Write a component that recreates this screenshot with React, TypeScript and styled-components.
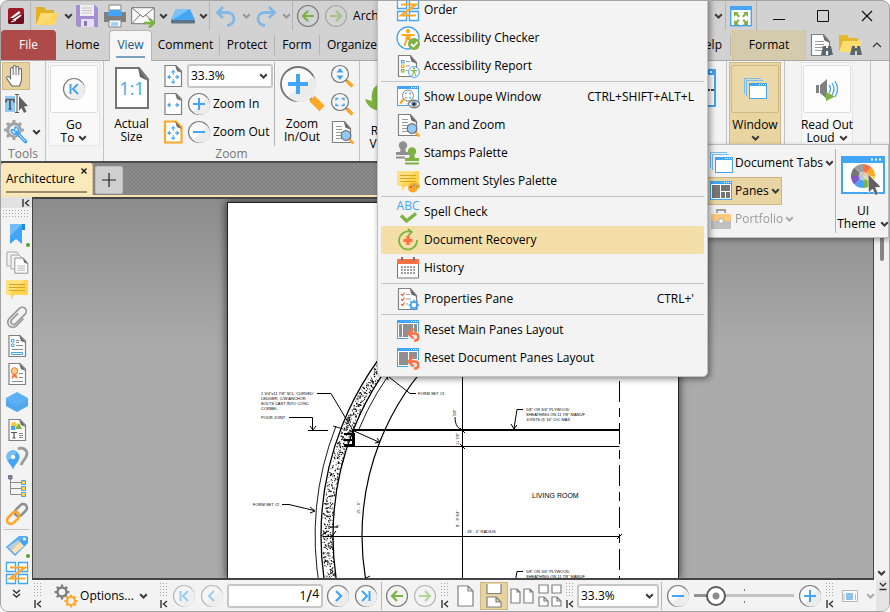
import React from 'react';
import styled, { createGlobalStyle } from 'styled-components';

const BLUE = '#42a5f5';
const ORANGE = '#ffa726';
const GREEN = '#7cb342';
const GRAY = '#757575';

const Global = createGlobalStyle`
  * { box-sizing: border-box; }
  body { margin: 0; background: #fff; font-family: "Open Sans", "Noto Sans", sans-serif; font-size: 12px; line-height: 14px; color: #000; }
  button, input, select { font: inherit; color: inherit; }
  button { border: 0; padding: 0; background: none; }
`;

/* ---------- layout parts ---------- */

const Window = styled.div`
  position: relative; height: 100vh; min-height: 420px; display: flex; flex-direction: column;
  background: #d2d2d2; border: 1px solid #a3a3a3; border-radius: 8px; overflow: hidden;
`;
const Row = styled.div`display: flex; align-items: center;`;
const TitleBar = styled.header`display: flex; justify-content: space-between; height: 29px; flex: none;`;
const Slot = styled.button<{ $w?: number; $h?: number; $on?: boolean }>`
  display: flex; align-items: center; justify-content: center; flex: none;
  width: ${p => p.$w ?? 28}px; height: ${p => p.$h ?? 28}px;
  ${p => p.$on && 'background: #e8d3a0; border: 1px solid #cdb988;'}
`;
const VLine = styled.span<{ $h?: number; $m?: number }>`
  width: 1px; height: ${p => p.$h ?? 28}px; background: #b4b4b4; flex: none; margin: 0 ${p => p.$m ?? 0}px;
`;
const TabRow = styled.nav`display: flex; justify-content: space-between; height: 31px; flex: none; border-bottom: 1px solid #a9a9a9;`;
const Tab = styled.button<{ $w: number; $kind?: 'file' | 'active' | 'context' }>`
  width: ${p => p.$w}px; height: 30px; flex: none; text-align: center;
  ${p => p.$kind === 'file' && 'background: #ad4a4a; color: #fff; border-radius: 4px 4px 0 0;'}
  ${p => p.$kind === 'context' && 'background: #d4cbad; border: 1px dotted #d9bf6c; border-width: 0 1px;'}
  ${p => p.$kind === 'active' && `
    height: 31px; background: #f6f6f6; color: #1f5582; border: 1px solid #b5b5b5; border-bottom: 0;
    border-radius: 4px 4px 0 0;`}
  span { display: block; margin: 0 6px; padding: 4px 0; ${p => p.$kind === 'active' && 'border-bottom: 2px solid #7ba0c2;'} }
`;
const Ribbon = styled.section`display: flex; justify-content: space-between; height: 102px; flex: none; background: #f3f3f3; border-bottom: 2px solid #4c4c4c;`;
const Group = styled.div<{ $w: number }>`
  display: flex; flex-direction: column; flex: none; width: ${p => p.$w}px; height: 100px; border-right: 1px solid #c4c4c4;
`;
const GroupBody = styled.div`display: flex; flex: 1; padding-top: 1px;`;
const GroupLabel = styled.div`height: 14px; text-align: center; color: #777;`;
const Column = styled.div<{ $w?: number }>`display: flex; flex-direction: column; ${p => p.$w && `width: ${p.$w}px; flex: none;`}`;
const BigButton = styled.button<{ $w: number; $framed?: boolean; $on?: boolean }>`
  display: flex; flex-direction: column; align-items: center; flex: none; width: ${p => p.$w}px; height: 84px; padding-top: 2px; line-height: 13px;
  ${p => p.$framed && 'border: 1px solid #e6e6e6; background: #f8f8f8;'}
  ${p => p.$on && 'border-color: #cdb988; background: #e9d5a2;'}
`;
const BigFace = styled.span<{ $framed?: boolean; $on?: boolean }>`
  display: flex; align-items: center; justify-content: center; width: 48px; height: 48px; margin-bottom: 5px; flex: none;
  ${p => p.$framed && 'border: 1px solid #dedede; background: #fdfdfd; border-radius: 2px;'}
  ${p => p.$on && 'border-color: #cdb988; background: #ebd8a8;'}
`;
const InlineRow = styled.span`display: flex; align-items: center; justify-content: center; gap: 4px; min-height: 13px; white-space: nowrap;`;
const SelectBox = styled.label<{ $w: number }>`
  display: grid; align-items: center; width: ${p => p.$w}px; height: 24px; flex: none;
  border: 2px solid #c6c6c6; border-radius: 3px; background: #fff;
  > * { grid-area: 1 / 1; }
  > svg { justify-self: end; margin-right: 3px; pointer-events: none; }
`;
const Select = styled.select`appearance: none; border: 0; background: none; padding: 0 2px; width: 100%; outline: 0;`;
const TextButton = styled.button`display: flex; align-items: center; gap: 2px; height: 28px; white-space: nowrap;`;

const DocTabs = styled.div`
  display: flex; height: 34px; flex: none; align-items: flex-start; border-bottom: 2px solid #f6e4b4;
  background: conic-gradient(rgba(0,0,0,.07) 25%, transparent 0 50%, rgba(0,0,0,.07) 0 75%, transparent 0) 0 0 / 4px 4px #8c8c8c;
`;
const DocTab = styled.div`
  width: 92px; height: 32px; background: #fbe8bb; border-radius: 3px 3px 0 0; padding: 0 5px;
  display: grid; grid-template-columns: 1fr auto; grid-template-rows: 30px;
  border-right: 1px solid #d8c493;
`;
const DocName = styled.span`align-self: stretch; padding-top: 9px; grid-column: 1 / 3; grid-row: 1; border-bottom: 2px solid #9c8d6c;`;
const DocClose = styled.button`grid-column: 2; grid-row: 1; display: flex; align-self: start; margin-top: 5px;`;
const NewTab = styled.button`
  display: flex; align-items: center; justify-content: center; width: 28px; height: 28px; margin: 3px 0 0 2px;
  background: #cfcfcf; border: 1px solid #bcbcbc; border-radius: 2px;
`;
const Body = styled.div`display: flex; flex: 1; min-height: 0;`;
const Sidebar = styled.aside`display: flex; flex-direction: column; align-items: center; width: 31px; flex: none; background: #f3f3f3;`;
const SideHead = styled.button`display: flex; justify-content: flex-end; align-items: center; width: 100%; height: 11px; flex: none; background: #e2e2e2; padding-right: 2px;`;
const SideButton = styled.button`display: flex; align-items: center; justify-content: center; position: relative; width: 28px; height: 28px; flex: none;`;
const Dot = styled.i`position: absolute; right: 1px; bottom: 1px; width: 4px; height: 4px; border-radius: 2px; background: #5a9e2b;`;
const HLine = styled.hr`width: 26px; margin: 1px 0; border: 0; height: 1px; flex: none; background: #c4c4c4;`;
const Grip = styled.i<{ $wide?: boolean }>`
  display: block; flex: none; width: ${p => (p.$wide ? 27 : 9)}px; height: ${p => (p.$wide ? 9 : 15)}px; margin: ${p => (p.$wide ? '2px 0 1px' : '0')};
  background: #a6a6a6;
  mask: linear-gradient(90deg, #000 1px, transparent 1px) 0 0 / 3px 3px, linear-gradient(#000 1px, transparent 1px) 0 0 / 3px 3px;
  mask-composite: intersect;
`;
const Main = styled.div`display: flex; flex-direction: column; flex: 1; min-width: 0;`;
const View = styled.div`display: flex; flex: 1; min-height: 0;`;
const Canvas = styled.main`
  flex: 1; min-width: 0; display: flex; justify-content: center; padding-top: 3px; overflow: hidden;
  border: 1px solid #444; border-top-width: 2px; border-bottom-width: 2px;
  background:
    conic-gradient(rgba(0,0,0,.04) 25%, transparent 0 50%, rgba(0,0,0,.04) 0 75%, transparent 0) 0 0 / 4px 4px,
    linear-gradient(#8f8f8f, #aeaeae 150px);
`;
const Page = styled.article`flex: none; background: #fff; box-shadow: 0 0 8px 1px rgba(0,0,0,.6); border: 1px solid #222; border-width: 1px 1px 0 1px; overflow: hidden;`;
const ScrollBar = styled.div`
  display: flex; flex-direction: column; align-items: center; justify-content: space-between; width: 15px; flex: none; padding: 36px 0 4px; background: #f1f1f1;
`;
const Thumb = styled.i`width: 4px; height: 28px; border-radius: 2px; background: #858585;`;
const StatusBar = styled.footer`display: flex; align-items: center; height: 31px; flex: none; background: #f3f3f3;`;
const GripCol = styled.div`display: flex; flex-direction: column; align-items: flex-start; gap: 2px; width: 10px; flex: none; margin-left: 2px;`;
const PageField = styled.label`
  display: flex; align-items: center; justify-content: flex-end; width: 96px; height: 24px; padding-right: 2px; flex: none; margin: 0 1px;
  border: 2px solid #c6c6c6; border-radius: 3px; background: #fff;
  input { width: 70px; border: 0; padding: 0; outline: 0; background: none; text-align: right; }
  sup { font-size: 12px; line-height: 12px; vertical-align: top; margin-bottom: 4px; }
  b { font-weight: 400; font-size: 16px; }
`;
const Range = styled.input`
  appearance: none; flex: 1; min-width: 60px; height: 20px; margin: 0 2px; border: 0;
  background:
    linear-gradient(90deg, #929292 22px, #c2c2c2 22px) center / 100% 3px no-repeat,
    linear-gradient(#f3f3f3, #f3f3f3) center / 2px 10px no-repeat,
    linear-gradient(#777, #777) center / 1px 14px no-repeat;
  &::-webkit-slider-thumb {
    appearance: none; width: 20px; height: 20px; border: 2px solid #5c5c5c; border-radius: 10px;
    background: radial-gradient(circle, #8c8c8c 3px, #fff 4px);
  }
`;
const EndCol = styled.button`display: flex; align-items: flex-start; justify-content: center; width: 13px; height: 31px; padding-top: 2px; flex: none; margin-left: auto; background: #e4e4e4;`;

const Menu = styled.div`
  position: absolute; z-index: 3; left: 376px; top: -6px; width: 331px; padding: 0 3px 4px; background: #f3f3f3;
  border: 1px solid #c2c2c2; border-radius: 0 0 5px 5px; box-shadow: 2px 2px 6px rgba(0,0,0,.45);
`;
const MenuItem = styled.button<{ $on?: boolean }>`
  display: flex; align-items: center; width: 100%; height: 28px; padding: 0 10px 0 15px; gap: 4px; white-space: nowrap; border-radius: 2px;
  background: ${p => (p.$on ? '#f5dfa8' : 'transparent')};
  kbd { font: inherit; margin-left: auto; }
`;
const MenuLine = styled.hr`margin: 1px 0; border: 0; height: 1px; background: #c4c4c4;`;
const Flyout = styled.div`
  position: absolute; z-index: 2; right: 0; top: 143px; width: 188px; height: 94px; display: flex; align-items: center; padding-left: 5px;
  background: #f3f3f3; border: 1px solid #bcbcbc; box-shadow: 1px 2px 5px rgba(0,0,0,.35);
`;
const FlyButton = styled.button<{ $on?: boolean; $dim?: boolean }>`
  display: flex; align-items: center; align-self: flex-start; height: 28px; gap: 2px; padding: 0 1px; white-space: nowrap; border: 1px solid transparent;
  ${p => p.$on && 'background: #e9d5a2; border-color: #c9b684;'}
  ${p => p.$dim && 'color: #858585; opacity: .8;'}
`;
const Plain = styled.span`white-space: nowrap;`;

/* ---------- icons ---------- */

const IconSvg = styled.svg`display: block; flex: none;`;
type P = { children: React.ReactNode; w?: number; h?: number; vb?: string };
const I = ({ children, w = 24, h = 24, vb }: P) => (
  <IconSvg width={w} height={h} viewBox={vb ?? `0 0 ${w} ${h}`} fill="none" aria-hidden="true">{children}</IconSvg>
);

const Chev = ({ c = '#3a3a3a' }: { c?: string }) => <I w={9} h={6}><path d="M1.200 1.200l3.300 3.300 3.300-3.300" stroke={c} strokeWidth="2" /></I>;
const Collapse = () => <I w={8} h={8}><path d="M1 0v8M7 1L3.500 4 7 7" stroke="#333" strokeWidth="1.400" /></I>;
const DocShape = ({ s = '#808080', fill = '#fff' }: { s?: string; fill?: string }) => (
  <><path d="M2.500 1.500h12l6 7v14h-18z" fill={fill} stroke={s} strokeWidth="1.200" /><path d="M13.500 1l7.500 9-5.500-2.500z" fill="#616161" /></>
);
const SmallDoc = ({ s = '#808080', sw = 1.2 }: { s?: string; sw?: number }) => (
  <><path d="M4 1.500h11l5.500 5.500v15.500H4z" fill="#fff" stroke={s} strokeWidth={sw} /><path d="M14 1l7 8-5-2z" fill="#616161" /></>
);
const Circle = ({ children, dim }: { children: React.ReactNode; dim?: boolean }) => (
  <I><g opacity={dim ? 0.5 : 1}><circle cx="12" cy="12" r="10.500" fill="#fafafa" stroke="#7c7c7c" strokeWidth="1.200" /><path d="M20 5.500a10 10 0 0 1-14 14.500z" fill="#ececec" />{children}</g></I>
);
const Plus = () => <Circle><path d="M12 6v12M6 12h12" stroke={BLUE} strokeWidth="2" /></Circle>;
const Minus = () => <Circle><path d="M6 12h12" stroke={BLUE} strokeWidth="2" /></Circle>;
const First = ({ dim }: { dim?: boolean }) => <Circle dim={dim}><path d="M8.500 7v10M16 7l-5 5 5 5" stroke={BLUE} strokeWidth="2" /></Circle>;
const Prev = () => <Circle dim><path d="M14 7l-5 5 5 5" stroke={BLUE} strokeWidth="2" /></Circle>;
const Next = () => <Circle><path d="M10 7l5 5-5 5" stroke={BLUE} strokeWidth="2.200" /></Circle>;
const Last = () => <Circle><path d="M15.500 7v10M8 7l5 5-5 5" stroke={BLUE} strokeWidth="2" /></Circle>;
const Ring = ({ children, dim }: { children: React.ReactNode; dim?: boolean }) => (
  <I><g opacity={dim ? 0.5 : 1}><circle cx="12" cy="12" r="10.500" stroke="#7c7c7c" strokeWidth="1.200" />{children}</g></I>
);
const Back = () => <Ring><path d="M18 12H7.500M12 7l-5 5 5 5" stroke={GREEN} strokeWidth="2.200" /></Ring>;
const Fwd = () => <Ring dim><path d="M6 12h10.500M12 7l5 5-5 5" stroke={GREEN} strokeWidth="2.200" /></Ring>;
const Logo = () => (
  <I w={18} h={18}><rect x="1" y="1" width="16" height="16" rx="2" fill="#9b1b26" /><path d="M1 13L17 7v8a2 2 0 0 1-2 2H3a2 2 0 0 1-2-2z" fill="#6d0f1a" />
    <path d="M3 11l9-7 1.500 2L6 11zM5 13l8-5 2 .5L8 13.500z" fill="#fff" /><path d="M4 15l5-1.500" stroke="#fff" /></I>
);
const Folder = () => (
  <I><path d="M1 3h8l2 3h8v4H6L2 21H1z" fill="#e2b023" /><path d="M6 9h18l-5 12H1z" fill="#ffd75e" /><path d="M6 9h14L6 21H1z" fill="#ffe082" opacity=".6" /></I>
);
const Save = () => (
  <I><path d="M1 1h19l3 3v19H3l-2-2z" fill="#a58fd0" /><path d="M5 1h14v11H5z" fill="#eee" /><path d="M7 4h10M7 6.500h10M7 9h10" stroke="#c9c9c9" /><path d="M6 15h13v8H6z" fill="#e4e0ee" /><path d="M9 17h3v5H9z" fill="#8d77bb" /></I>
);
const Print = () => (
  <I><path d="M6 1h12v5H6z" fill="#fff" stroke="#808080" /><path d="M1 8h22v10H1z" fill="#808080" /><path d="M6 6h12l1 6H5z" fill={BLUE} /><path d="M6 16h12v7H6z" fill="#fff" stroke="#808080" /><path d="M8 19h7M8 21h7" stroke={BLUE} /></I>
);
const Mail = () => (
  <I><path d="M.7 3.700h22.600v16H.7z" fill="#fafafa" stroke={GRAY} /><path d="M1 4l11 9L23 4M1 19.500l8-8.500M23 19.500l-8-8.500" stroke={GRAY} /><path d="M13 19h9M18 14.500l5 4.500-5 4.500" stroke={GREEN} strokeWidth="2.400" /></I>
);
const Scan = () => <I><path d="M5 5h14l5 11H0z" fill={BLUE} /><path d="M5 5h14L3 15H0z" fill="#7cc1f8" /><rect x="0" y="16" width="24" height="3.500" rx="1" fill="#5f7380" /></I>;
const Undo = () => <I w={22}><path d="M8 3L2.500 8.500 8 14M3 8.500h9c3.500 0 7 2 7 6s-3 7-7 7" stroke="#7fb7e6" strokeWidth="2.800" /></I>;
const Redo = () => <I w={22}><path d="M14 3l5.500 5.500L14 14M19 8.500h-9c-3.500 0-7 2-7 6s3 7 7 7" stroke="#7fb7e6" strokeWidth="2.800" /></I>;
const FullScreen = () => (
  <I><rect x="1.700" y="2.700" width="20.600" height="19" fill="#fff" stroke={BLUE} strokeWidth="1.400" /><path d="M1 2h22v4H1z" fill={BLUE} />
    <path d="M5 8h5L8.500 9.500 11 12l-1.500 1.500L7 11l-2 2zM19 8v5l-2-2-2.500 2.500L13 12l2.500-2.500L14 8zM5 21v-5l2 1.500L9 15l1.500 1.500L8.500 19l1.500 2zM19 21h-5l1.500-2-2-2.500L15 15l2 2.500 2-1.500z" fill={GREEN} /></I>
);
const Hand = () => (
  <I><path d="M8 22c-2-3-4-5-5.500-8 0-2 2.500-2 4 .5V5c0-2 2.700-2 2.700 0V3c0-2 2.800-2 2.800 0v1c0-2 2.800-2 2.800 0v2c0-2 2.700-2 2.700 0v9c0 3-1 4.500-2 7z" fill="#fff" stroke="#6d6d6d" strokeWidth="1.100" /><path d="M9.200 5v6M12 4v7M14.800 5v6" stroke="#6d6d6d" /></I>
);
const SelectText = () => (
  <I><path d="M0 4h10v16H0z" fill="#90caf9" /><path d="M1 7.500h8v3M1 7.500v3M5 7.500v9M3.500 17h3" stroke="#555" strokeWidth="1.700" /><path d="M10 2.500h4M12 3v17M10 20.500h4" stroke="#555" /><path d="M14 4l9 10-4 .5 2.500 5-2.500 1.500-2.500-5-2.500 2.500z" fill="#616161" /></I>
);
const gearTeeth = Array.from({ length: 8 }, (_, i) => i * 45);
const Gear = ({ x, y, r, c }: { x: number; y: number; r: number; c: string }) => (
  <g transform={`translate(${x} ${y})`}><circle r={r} stroke={c} strokeWidth={r * 0.55} />
    {gearTeeth.map(a => <path key={a} transform={`rotate(${a})`} d={`M0 ${-r}V${-r * 1.65}`} stroke={c} strokeWidth={r * 0.5} />)}</g>
);
const Wrench = () => (
  <I><Gear x={10} y={10} r={6} c="#a2a2a2" /><circle cx="10.500" cy="10.500" r="5" fill="#f3f3f3" /><path d="M12.500 12.500l9 9" stroke={BLUE} strokeWidth="3.600" strokeLinecap="round" />
    <path d="M7.500 9.500a3.600 3.600 0 1 0 3.500-2.500M7.500 9.500l3 1 .5-3.500" stroke={BLUE} strokeWidth="1.600" /><path d="M15 15l6 6" stroke="#d5ecff" /></I>
);
const Gears = () => <I><Gear x={8} y={8} r={4.500} c="#808080" /><Gear x={17} y={17} r={4} c={ORANGE} /></I>;
const ActualPage = () => (
  <I w={34} h={42}><path d="M1 1h23l9 11v29H1z" fill="#fff" stroke="#757575" strokeWidth="2" /><path d="M23 1l10 13-8-4z" fill="#616161" />
    <text x="17" y="28" textAnchor="middle" fontSize="18" fill={BLUE} fontFamily="Open Sans">1:1</text></I>
);
const Fit = ({ kind }: { kind: 'page' | 'width' | 'visible' }) => (
  <I><SmallDoc s={kind === 'visible' ? ORANGE : '#808080'} sw={kind === 'visible' ? 2.2 : 1.2} />
    <path d="M9 10.500L6 13l3 2.500zM15.500 10.500l3 2.500-3 2.500z" fill={BLUE} /><path d="M8 13h2.500M14 13h2.500" stroke={BLUE} />
    {kind !== 'width' && <><path d="M9.700 8.500L12.200 6l2.500 2.500zM9.700 17.500l2.500 2.500 2.500-2.500z" fill={BLUE} /><path d="M12.200 8v3M12.200 15v3" stroke={BLUE} /></>}</I>
);
const BigZoom = () => (
  <I w={48} h={48}><path d="M31 33l5 5" stroke="#888" strokeWidth="3" /><path d="M34 34.500l10 10" stroke={ORANGE} strokeWidth="7.500" /><circle cx="20" cy="20" r="17" fill="#fafafa" stroke="#757575" strokeWidth="1.800" /><path d="M35 12a16 16 0 0 1-25 20z" fill="#ececec" /><path d="M20 10v20M10 20h20" stroke={BLUE} strokeWidth="4" /></I>
);
const Lens = ({ children }: { children: React.ReactNode }) => (
  <I><path d="M15 15l3 3" stroke="#888" strokeWidth="2" /><path d="M17 17l5.500 5.500" stroke={ORANGE} strokeWidth="3.600" /><circle cx="10" cy="10" r="8.500" fill="#f5f5f5" stroke="#757575" strokeWidth="1.200" />{children}</I>
);
const Lines = ({ x = 6, y = 9, n = 4, l = 9 }) => <>{Array.from({ length: n }, (_, i) => <path key={i} d={`M${x} ${y + i * 3 + 0.5}h${l}`} stroke="#9a9a9a" />)}</>;
const PanZoom = () => (
  <I><DocShape /><Lines l={6} y={6} n={5} /><path d="M19 19l4.500 4.500" stroke={ORANGE} strokeWidth="2.600" /><circle cx="16" cy="15.500" r="4.800" fill="#90caf9" stroke="#707070" strokeWidth="1.200" /></I>
);
const Order = () => (
  <I><path d="M1.500 1.500h9v9h-9zM13.500 1.500h9v9h-9zM1.500 13.500h9v9h-9zM13.500 13.500h9v9h-9z" fill="#fff" stroke={BLUE} strokeWidth="1.300" /><path d="M5 6.500h15L5 17.500h15" stroke={ORANGE} strokeWidth="2.200" /></I>
);
const Person = ({ c }: { c: string }) => <><circle cx="12" cy="5" r="2.200" fill={c} /><path d="M5.500 9h13M12 9v5M10.500 9v4.500L8.500 20M13.500 9v4.500l2 6.500" stroke={c} strokeWidth="2" /></>;
const AccessCheck = () => (
  <I><circle cx="12" cy="12" r="11" fill="#fff" stroke={BLUE} strokeWidth="1.300" /><Person c={ORANGE} /><circle cx="18" cy="18" r="6" fill={GREEN} /><path d="M15 18l2.500 2.500 4-4.500" stroke="#fff" strokeWidth="1.800" /></I>
);
const AccessReport = () => (
  <I><DocShape /><path d="M5.500 6.500h2.500v2.500H5.500z" stroke={BLUE} strokeWidth="1.200" /><path d="M5.500 11h2.500v2.500H5.500z" stroke={ORANGE} strokeWidth="1.200" /><path d="M5.500 15.500h2.500V18H5.500z" stroke={GREEN} strokeWidth="1.200" /><path d="M10 7.500h4M10 12h4M10 16.500h2" stroke="#9a9a9a" />
    <circle cx="18" cy="18" r="5.400" fill="#fff" stroke={BLUE} /><g transform="translate(12 12) scale(.5)"><Person c={GREEN} /></g></I>
);
const Win = ({ children, x = 1, y = 2, w = 22, h = 19 }: { children?: React.ReactNode; x?: number; y?: number; w?: number; h?: number }) => (
  <><rect x={x + 0.5} y={y + 0.5} width={w - 1} height={h - 1} fill="#fff" stroke={BLUE} /><rect x={x} y={y} width={w} height="3" fill={BLUE} /><path d={`M${x + w - 8} ${y + 1.500}h7`} stroke="#fff" strokeDasharray="1 1" />{children}</>
);
const Loupe = () => (
  <I><Win y={1} h={20} /><path d="M8 14l-4 4.500" stroke={ORANGE} strokeWidth="2.400" /><circle cx="12" cy="10.500" r="5.500" fill="#fafafa" stroke="#888" /><path d="M9.500 9V8H11M13 8h1.500v1.500M14.500 12v1H13M11 13H9.500v-1" stroke={BLUE} /><path d="M12 19c3-5 9-5 12 0-3 5-9 5-12 0z" fill="#fff" stroke="#808080" strokeWidth="1.400" /><circle cx="18" cy="19" r="3" fill="#7fa8c8" /><circle cx="18" cy="19" r="1.500" fill="#222" /></I>
);
const Stamp = ({ c }: { c: string }) => <><circle cx="7" cy="4.500" r="4.200" fill={c} /><path d="M5 7h4l1 4h4v3H0v-3h4zM0 15.500h14v2H0z" fill={c} /></>;
const Stamps = () => <I><Stamp c="#8f8f8f" /><path d="M9 14.500h15V24H9z" fill="#f3f3f3" /><g transform="translate(9 6)"><Stamp c={GREEN} /></g></I>;
const NoteShape = () => <><path d="M1 2h22v15H9l-3 5v-5H1z" fill="#ffd54f" /><path d="M1 2h19L4 17H1z" fill="#ffe27f" /><path d="M4 6.500h16M4 9.500h16M4 12.500h16" stroke="#d9a520" /></>;
const Note = () => <I><NoteShape /></I>;
const NotePalette = () => <I><NoteShape /><path d="M12 18c1-5 12-6 12 0 0 2-3 1-3 3s-4 3-6 2c-2-.5-3-2-3-5z" fill={ORANGE} /><circle cx="15" cy="18" r="1" fill="#e53935" /><circle cx="18" cy="16.500" r="1" fill={BLUE} /><circle cx="21" cy="17.500" r="1" fill={GREEN} /></I>;
const Spell = () => <I><text x="12" y="10" textAnchor="middle" fontSize="12" fill={BLUE} fontFamily="Open Sans">ABC</text><path d="M5 15.500l5.500 5.500L20 13.500" stroke={GREEN} strokeWidth="3.400" /></I>;
const Recover = () => <I><path d="M15 4A9 9 0 1 0 21 12" stroke={GREEN} strokeWidth="1.700" /><path d="M12 1l4 3-4 4" stroke={GREEN} strokeWidth="1.700" /><path d="M12 8v9M7.500 12.500h9" stroke="#ff7043" strokeWidth="3.200" /></I>;
const Cal = () => (
  <I><path d="M1.500 4h21v18h-21z" fill="#fff" stroke="#757575" /><path d="M1 3h22v5H1z" fill="#ff7043" /><path d="M6 1v4M18 1v4" stroke="#757575" strokeWidth="2" /><path d="M5 11h14M5 14h14M5 17h14" stroke="#9e9e9e" strokeWidth="2" strokeDasharray="2 1" /></I>
);
const Props = () => (
  <I><DocShape /><path d="M5 7l1.500 1.500L8.500 5.500M5 12l1.500 1.500 2-3M5 17l1.500 1.500 2-3" stroke="#ff5a3c" strokeWidth="1.200" /><path d="M10 7.500h4M10 12h5M10 17h2" stroke="#9a9a9a" /><Gear x={18} y={18} r={3.200} c={BLUE} /></I>
);
const ResetPanes = ({ doc }: { doc?: boolean }) => (
  <I><Win><path d={doc ? 'M3 6h9v13H3zM13 6h8v7h-8zM13 14h8v5h-8z' : 'M3 6h3v13H3zM7 6h10v13H7zM18 6h3v13h-3z'} fill="#8f8f8f" /></Win><path d="M12 14h13v10H12z" fill="#f3f3f3" opacity=".8" /><path d="M17.500 10.500l-5 5 5 5M13 15.500h6c4.500 0 4.500 7 0 7h-1" stroke="#ff7043" strokeWidth="2.400" /></I>
);
const WinStack = () => (
  <I><path d="M1.500 17V1.500H18M3.500 19V3.500H20" stroke="#74bdf7" /><Win x={6} y={6} w={18} h={16} /></I>
);
const Panes = () => <I><Win><path d="M3 6h8v13H3zM12 6h9v6h-9zM12 13h4v6h-4zM17 13h4v6h-4z" fill="#757575" /></Win></I>;
const Portfolio = () => <I><path d="M8 6V3h8v3" stroke="#888" strokeWidth="1.800" /><path d="M2 7h20v7H2z" fill="#ffbf5e" /><path d="M2 14h20v8H2z" fill="#b4b4b4" /><circle cx="12" cy="14" r="2.500" fill="#fff" stroke="#999" /></I>;
const wheel = ['#ff7043', '#ffa726', '#ffd54f', '#7cb342', '#42a5f5', '#7e57c2', '#757575', '#9e9e9e'];
const Theme = () => (
  <I w={44} h={40}><rect x="1" y="2" width="42" height="36" fill="#fff" stroke={BLUE} strokeWidth="2" /><path d="M0 1h44v7H0z" fill={BLUE} /><path d="M30 4.500h11" stroke="#fff" strokeWidth="2" strokeDasharray="2 2" />
    <g transform="translate(22 21)">{wheel.map((c, i) => <path key={c} transform={`rotate(${i * 45})`} d="M0 0V-12A12 12 0 0 1 8.500-8.500z" fill={c} />)}<circle r="4.500" fill="#ddd" opacity=".7" /></g>
    <path d="M27 19l13 13-5.500.5 3 6.500-3 1.500-3-6.500-4 4z" fill="#616161" stroke="#fff" strokeWidth=".6" /></I>
);
const Speaker = () => <I><path d="M1 8h3v8H1zM5 8l7-6v20l-7-6z" fill="#808080" /><path d="M14 8q3 4 0 8M17 6q4 6 0 12M20 4q5 8 0 16" stroke={BLUE} strokeWidth="1.300" /><path d="M11 15l9 4.500-9 4.500z" fill={GREEN} /></I>;
const Binoc = () => <path d="M14 13h3v2h2v-2h3l2 9h-5v-4h-2v4h-5z" fill="#5b6770" />;
const FindDoc = () => <I><DocShape /><Lines l={9} y={8} /><Binoc /></I>;
const FindFolder = () => <I><path d="M1 2h8l2 3h9v4H5L2 19H1z" fill="#e8b62a" /><path d="M5 8h19l-4 11H1z" fill="#ffdc70" /><Binoc /></I>;
const Bookmark = () => <I><path d="M5 2h12v20l-6-5-6 5z" fill={BLUE} /><path d="M17 2h3v6h-3z" fill="#1e88e5" /><path d="M5 2h12L5 14z" fill="#74bdf7" /></I>;
const Pages = () => <I><path d="M5 16H2V2h10l2 3" stroke="#a5a5a5" /><path d="M9 19H6V5h8l3 3" stroke="#a5a5a5" /><g transform="translate(8 7) scale(.72)"><DocShape /><Lines y={12} n={3} l={11} /></g></I>;
const Clip = () => (
  <I><g transform="rotate(45 12 12)" stroke="#9b9b9b" strokeWidth="1.700"><path d="M17 8v10a5 5 0 0 1-10 0V3.500a4 4 0 0 1 8 0V17a2.500 2.500 0 0 1-5.500 0V8" /></g></I>
);
const Fields = () => <I><SmallDoc /><path d="M6.500 5.500h2.500V8H6.500zM6.500 10h2.500v2.500H6.500zM6.500 18.500h11v2h-11z" stroke={BLUE} /><path d="M11 6.500h3M11 8.500h3M11 11.500h7M7 15.500h11" stroke="#888" /></I>;
const Sign = () => <I><SmallDoc /><path d="M8 11l-1.500 6 3-2 3 2-1.500-6" fill="#ff7043" /><circle cx="9.500" cy="9" r="3.300" fill="#ffcc80" stroke="#ff7043" /><path d="M14 11.500h4M14 15.500h4M7 19.500h11" stroke="#888" /></I>;
const Layers = () => <I><path d="M1 14l11 6 11-6v2l-11 6-11-6z" fill={BLUE} /><path d="M1 10.500l11 6 11-6v3l-11 6-11-6z" fill="#4aa8f3" /><path d="M1 8l11-6 11 6v2l-11 6-11-6z" fill="#5cb0f6" /><path d="M1 10l11 6 11-6M1 13.500l11 6 11-6" stroke="#2a8bdc" strokeWidth=".7" /></I>;
const Content = () => <I><SmallDoc /><circle cx="9" cy="7" r="3" fill="#ffca28" /><path d="M10 11l4-6 3 6z" fill={GREEN} /><path d="M6 8h4v4H6z" fill={BLUE} /><path d="M6 14.500h6M9 14.500V20M7.500 20h3" stroke="#555" strokeWidth="1.200" /><path d="M14 15.500h4M14 17.500h4M14 19.500h4" stroke="#888" /></I>;
const Pins = () => <I><path d="M13 3a6 6 0 0 1 9 4c0 5-4 7-6 12" stroke="#9a9a9a" strokeWidth="2.800" /><path d="M8 23.500C6 18 1.500 15.500 1.500 11a6.500 6.500 0 0 1 13 0c0 4.500-4.500 7-6.500 12.500z" fill={BLUE} /><path d="M1.500 11a6.500 6.500 0 0 1 11-5L3 15z" fill="#74bdf7" /><circle cx="8" cy="11" r="2.300" fill="#fff" /></I>;
const Tree = () => <I><path d="M5.500 4v16.500H16M5 8.500h11M5 14.500h11" stroke="#8a8a8a" /><path d="M3.500 1.500h3.500V5H3.500z" fill="#ff5722" stroke="#4a86b8" /><path d="M16.500 6.500h4v4h-4zM16.500 12.500h4v4h-4zM16.500 18.500h4v4h-4z" fill="#ffd54f" stroke={BLUE} /></I>;
const Link = () => (
  <I><g transform="rotate(-45 12 12)" strokeWidth="2.600"><rect x="10.500" y="8.200" width="14" height="7.600" rx="3.800" stroke="#8f8f8f" /><rect x="-.5" y="8.200" width="14" height="7.600" rx="3.800" stroke={ORANGE} /></g></I>
);
const Tag = () => <I><path d="M14 3h7l2 1v6L10 23 1 14z" fill={BLUE} /><path d="M13 7l6 6-9 8-7-7z" fill="#ffe0b2" /><path d="M14 3l7 0-15 15-4-4z" fill="#74bdf7" opacity=".45" /><circle cx="19.500" cy="6" r="1.500" fill="#fff" /></I>;
const PageIcon = ({ d, w = 24 }: { d: string; w?: number }) => <I w={w}><path d={d} fill="#fff" stroke="#808080" strokeWidth="1.200" /></I>;
const fold = (x: number, y: number, w: number, h: number, f = 4) => `M${x} ${y}h${w - f}l${f} ${f}v${h - f}h${-w}zM${x + w - f} ${y}v${f}h${f}`;

/* ---------- drawing ---------- */

const specks = (() => {
  let seed = 7;
  const rnd = () => ((seed = (seed * 16807) % 2147483647) / 2147483647);
  return Array.from({ length: 900 }, () => {
    const a = -0.25 + rnd() * 1.05;
    const r = 288 + rnd() * 10;
    return { x: 620 - r * Math.cos(a), y: 536 - r * Math.sin(a), s: 0.5 + rnd() * 0.9 };
  });
})();

const Label = ({ x, y, rows, size = 4, rot }: { x: number; y: number; rows: string[]; size?: number; rot?: boolean }) => (
  <text fontSize={size} fill="#000" stroke="none" fontFamily="Liberation Sans" transform={rot ? `rotate(-90 ${x} ${y})` : undefined}>
    {rows.map((t, i) => <tspan key={i} x={x} y={y + i * 5}>{t}</tspan>)}
  </text>
);

const Plan = () => (
  <IconSvg width="450" height="400" viewBox="228 203 450 400" fill="none" stroke="#000" role="img" aria-label="Architectural plan">
    <g strokeWidth=".9">
      <circle cx="620" cy="536" r="299" strokeWidth="1.300" />
      <circle cx="620" cy="536" r="287" strokeWidth="1.300" />
      <circle cx="620" cy="536" r="258" strokeWidth="1.200" />
      <path d="M336 426A304.500 304.500 0 0 0 320 590M359 429A282 282 0 0 1 400 360" />
      <path d="M333 426l10 3" />
    </g>
    <g fill="#000" stroke="none">{specks.map((s, i) => <rect key={i} x={s.x} y={s.y} width={s.s} height={s.s} />)}</g>
    <path d="M353 430H619.500" strokeWidth="2" />
    <path d="M344 446.500H619.500M323 536.500H620M462.500 370V600" />
    <path d="M619.500 381V600" strokeDasharray="21 6 9 6" />
    <path d="M344 434h10v11h-10M344 440h8M353 430v16" strokeWidth="2" />
    <path d="M317 393.500h14l22 37 27 12M377 438l3 4-5 1" />
    <path d="M289 417.500h23.500v12M310 426l3 4 3-4M308 430.500h20" />
    <path d="M282 504.500h7l25 6M310 507l5 4-5 2M416 393.500h-6l-23-18M391 375l-4 1 1 4" />
    <path d="M523 409.500h-6l-3 19M511 424l3 5 3-4M455 417c0 8 3 12 8 13M523 571.500h-6l-3 18" />
    <path d="M460 428l5 5M460 444l5 5M617 539l5-5M364 579l6-3M330 539l6-8M321 536l5-4M330 527h8" />
    <Label x={261} y={395} rows={["1 3/4\"x11 7/8\" SCL 'CURVED'", 'LEDGER, C/W ANCHOR', 'BOLTS CAST INTO CONC', 'CORBEL']} />
    <Label x={261} y={419} rows={['POUR JOINT']} />
    <Label x={253} y={506} rows={['FORM SET #2']} />
    <Label x={253} y={582} rows={['POUR JOINT']} />
    <Label x={418} y={395} rows={['FORM SET #3']} />
    <Label x={526} y={411} rows={['5/8" OR 3/4" PLYWOOD', 'SHEATHING ON 11 7/8" MANUF', 'JOISTS @ 16" O/C MAX']} />
    <Label x={526} y={573} rows={['5/8" OR 3/4" PLYWOOD', 'SHEATHING ON 11 7/8" MANUF']} />
    <Label x={467} y={533} rows={["18' - 0\"  RADIUS"]} />
    <Label x={532} y={498} size={7} rows={['LIVING ROOM']} />
    <Label x={336} y={528} rows={['8"']} />
    <Label x={456} y={416} rot rows={['5/8"']} />
    <Label x={459} y={445} rot rows={['11 7/8"']} />
    <Label x={459} y={527} rot rows={["8' - 8 3/4\""]} />
    <Label x={360} y={514} rot rows={["15' - 0\""]} />
  </IconSvg>
);

/* ---------- data ---------- */

type Entry = { icon: React.ReactNode; text: string; keys?: string; on?: boolean } | null;
const entries: Entry[] = [
  { icon: <Order />, text: 'Order' },
  { icon: <AccessCheck />, text: 'Accessibility Checker' },
  { icon: <AccessReport />, text: 'Accessibility Report' },
  null,
  { icon: <Loupe />, text: 'Show Loupe Window', keys: 'CTRL+SHIFT+ALT+L' },
  { icon: <PanZoom />, text: 'Pan and Zoom' },
  { icon: <Stamps />, text: 'Stamps Palette' },
  { icon: <NotePalette />, text: 'Comment Styles Palette' },
  null,
  { icon: <Spell />, text: 'Spell Check' },
  { icon: <Recover />, text: 'Document Recovery', on: true },
  { icon: <Cal />, text: 'History' },
  null,
  { icon: <Props />, text: 'Properties Pane', keys: "CTRL+'" },
  null,
  { icon: <ResetPanes />, text: 'Reset Main Panes Layout' },
  { icon: <ResetPanes doc />, text: 'Reset Document Panes Layout' },
];
const side: [string, React.ReactNode, boolean?][] = [
  ['Bookmarks', <Bookmark />, true], ['Thumbnails', <Pages />], ['Comments', <Note />], ['Attachments', <Clip />],
  ['Fields', <Fields />], ['Signatures', <Sign />], ['Layers', <Layers />], ['Content', <Content />],
  ['Destinations', <Pins />], ['Structure', <Tree />], ['Links', <Link />],
];

const Gripper = () => <GripCol><Grip /><Collapse /></GripCol>;

export default function App() {
  return (
    <>
      <Global />
      <Window>
        <TitleBar>
          <Row>
            <Slot $w={29} aria-label="Application"><Logo /></Slot><VLine />
            <Slot $w={32} aria-label="Open"><Folder /></Slot><Slot $w={10} aria-label="Open options"><Chev /></Slot>
            <Slot aria-label="Save"><Save /></Slot><Slot aria-label="Print"><Print /></Slot>
            <Slot aria-label="Mail"><Mail /></Slot><Slot $w={12} aria-label="Mail options"><Chev /></Slot>
            <Slot aria-label="Scan"><Scan /></Slot><Slot $w={12} aria-label="Scan options"><Chev /></Slot><VLine />
            <Slot $w={31} aria-label="Undo"><Undo /></Slot><Slot $w={10} aria-label="Undo options"><Chev c="#999" /></Slot>
            <Slot $w={30} aria-label="Redo"><Redo /></Slot><Slot $w={10} aria-label="Redo options"><Chev c="#999" /></Slot><VLine $m={1} />
            <Slot aria-label="Back"><Back /></Slot><Slot aria-label="Forward"><Fwd /></Slot>
            <Plain>&nbsp;Architecture</Plain>
          </Row>
          <Row>
            <Slot $w={14} aria-label="Layout options"><Chev /></Slot><VLine />
            <Slot $w={30} aria-label="Full screen"><FullScreen /></Slot><VLine />
            <Slot $w={44} aria-label="Minimize"><I><path d="M6 15.500h12" stroke="#111" /></I></Slot>
            <Slot $w={44} aria-label="Maximize"><I><path d="M6.500 6.500h11v11h-11z" stroke="#111" /></I></Slot>
            <Slot $w={44} aria-label="Close"><I><path d="M7 7l10 10M17 7L7 17" stroke="#111" strokeWidth="1.200" /></I></Slot>
          </Row>
        </TitleBar>
        <TabRow>
          <Row>
            <Tab $w={55} $kind="file"><span>File</span></Tab><Tab $w={53}>Home</Tab><Tab $w={43} $kind="active"><span>View</span></Tab>
            <Tab $w={67}>Comment</Tab><VLine $h={20} /><Tab $w={54}>Protect</Tab><VLine $h={20} /><Tab $w={44}>Form</Tab><VLine $h={20} /><Tab $w={64}>Organize</Tab>
          </Row>
          <Row>
            <Tab $w={40}>Help</Tab><VLine $h={20} $m={1} /><Tab $w={74} $kind="context">Format</Tab>
            <Slot $w={30} aria-label="Find"><FindDoc /></Slot><Slot aria-label="Search"><FindFolder /></Slot>
            <Slot $w={25} aria-label="Hide ribbon"><I w={10} h={6}><path d="M1 5l4-4 4 4" stroke="#333" strokeWidth="1.200" /></I></Slot>
          </Row>
        </TabRow>
        <Ribbon>
          <Row>
            <Group $w={45}>
              <GroupBody><Column>
                <Row><Column $w={1} /><Slot $on aria-label="Hand"><Hand /></Slot></Row><Slot $w={32} aria-label="Select text"><SelectText /></Slot>
                <Row><Slot $w={30} aria-label="Tool settings"><Wrench /></Slot><Slot $w={10} aria-label="Tool options"><Chev /></Slot></Row>
              </Column></GroupBody>
              <GroupLabel>Tools</GroupLabel>
            </Group>
            <Group $w={58}>
              <GroupBody>
                <Column $w={2} />
                <BigButton $w={52} $framed><BigFace $framed><First /></BigFace>Go<InlineRow>To <Chev /></InlineRow></BigButton>
              </GroupBody>
            </Group>
            <Group $w={256}>
              <GroupBody>
                <BigButton $w={55}><BigFace><ActualPage /></BigFace>Actual<br />Size</BigButton>
                <Column>
                  <Row><Slot aria-label="Fit page"><Fit kind="page" /></Slot>
                    <SelectBox $w={86}><Select aria-label="Zoom level"><option>33.3%</option></Select><Chev /></SelectBox></Row>
                  <Row><Slot aria-label="Fit width"><Fit kind="width" /></Slot><TextButton><Plus />Zoom In</TextButton></Row>
                  <Row><Slot aria-label="Fit visible"><Fit kind="visible" /></Slot><TextButton><Minus />Zoom Out</TextButton></Row>
                </Column>
                <VLine $h={84} $m={1} />
                <BigButton $w={52}><BigFace><BigZoom /></BigFace>Zoom<br />In/Out</BigButton>
                <Column>
                  <Slot aria-label="Zoom dynamically"><Lens><path d="M6.500 8.500L10 4l3.500 4.500zM6.500 11.500h7L10 16z" fill={BLUE} /></Lens></Slot>
                  <Slot aria-label="Marquee zoom"><Lens><path d="M6 8.500V6.500h2.500M11.500 6.500H14v2M14 11.500v2h-2.500M8.500 13.500H6v-2" stroke={BLUE} strokeWidth="1.400" /></Lens></Slot>
                  <Slot aria-label="Pan and zoom"><PanZoom /></Slot>
                </Column>
              </GroupBody>
              <GroupLabel>Zoom</GroupLabel>
            </Group>
            <BigButton $w={58}><BigFace><I w={48} h={48}><path d="M24 10C8 12 6 20 7 30l-7-2q4 13 20 12z" fill={GREEN} /></I></BigFace>Rotate<InlineRow>View <Chev /></InlineRow></BigButton>
          </Row>
          <Row>
            <Group $w={36}>
              <GroupBody><I w={26} h={48}><rect x="0" y="8" width="24" height="36" fill="#fff" stroke={BLUE} strokeWidth="2" /><path d="M0 7h25v6H0z" fill={BLUE} /><path d="M15 10h8" stroke="#fff" strokeWidth="2" strokeDasharray="2 2" /><path d="M4 28h19" stroke="#444" strokeWidth="2" strokeDasharray="3 1" /></I></GroupBody>
            </Group>
            <Group $w={58}>
              <GroupBody><Column $w={2} /><BigButton $w={52} $framed $on><BigFace $framed $on><WinStack /></BigFace>Window<InlineRow><Chev /></InlineRow></BigButton></GroupBody>
            </Group>
            <Group $w={86}>
              <GroupBody><Column $w={16} /><BigButton $w={52} $framed><BigFace $framed><Speaker /></BigFace><Plain>Read Out</Plain><InlineRow>Loud <Chev /></InlineRow></BigButton></GroupBody>
            </Group>
            <Column $w={18} />
          </Row>
        </Ribbon>
        <DocTabs>
          <DocTab><DocName>Architecture</DocName><DocClose aria-label="Close document"><I w={6} h={6}><path d="M.5.5l5 5M5.500.5l-5 5" stroke="#111" strokeWidth="1.300" /></I></DocClose></DocTab>
          <NewTab aria-label="New tab"><I w={16} h={16}><path d="M8 1v14M1 8h14" stroke="#222" strokeWidth="1.200" /></I></NewTab>
        </DocTabs>
        <Body>
          <Sidebar>
            <SideHead aria-label="Collapse sidebar"><Collapse /></SideHead>
            <Grip $wide />
            {side.map(([name, icon, dot]) => <SideButton key={name} aria-label={name}>{icon}{dot && <Dot />}</SideButton>)}
            <HLine />
            <SideButton aria-label="Tags"><Tag /><Dot /></SideButton>
            <SideButton aria-label="Order"><Order /></SideButton>
            <Slot $h={12} aria-label="More panes"><I w={9} h={9}><path d="M1 1l3.500 3L8 1M1 5l3.500 3L8 5" stroke="#333" strokeWidth="1.500" /></I></Slot>
          </Sidebar>
          <Main>
            <View>
              <Canvas><Page><Plan /></Page></Canvas>
              <ScrollBar><Thumb /><Chev /></ScrollBar>
            </View>
            <StatusBar>
              <Gripper />
              <Slot $w={114} as="div"><TextButton><Gears />Options...&nbsp;<Chev /></TextButton></Slot>
              <Gripper />
              <Slot aria-label="First page"><First dim /></Slot><Slot aria-label="Previous page"><Prev /></Slot>
              <PageField><input aria-label="Page number" defaultValue="1" /><b>/</b><sup>4</sup></PageField>
              <Slot aria-label="Next page"><Next /></Slot><Slot aria-label="Last page"><Last /></Slot><VLine $m={1} />
              <Slot aria-label="Previous view"><Back /></Slot><Slot aria-label="Next view"><Fwd /></Slot>
              <Gripper /><Column $w={1} />
              <Slot aria-label="Single page"><PageIcon d={fold(4, 2, 15, 20, 5)} /></Slot>
              <Slot $on aria-label="Continuous"><PageIcon d={`M5 0v9.500h14V0${fold(5, 13, 14, 10, 5)}`} /></Slot>
              <Slot aria-label="Two pages"><PageIcon d={fold(1, 5, 9, 14, 3) + fold(14, 5, 9, 14, 3)} /></Slot>
              <Slot aria-label="Two pages continuous"><PageIcon d={`M1 1h9v8H1zM14 1h9v8h-9z${fold(1, 13, 9, 9)}${fold(14, 13, 9, 9)}`} /></Slot>
              <Gripper /><Column $w={1} />
              <SelectBox $w={82}><Select aria-label="Zoom level"><option>33.3%</option></Select><Chev /></SelectBox>
              <VLine $m={2} />
              <Slot aria-label="Zoom out"><Minus /></Slot>
              <Range type="range" aria-label="Zoom" defaultValue={15} />
              <Slot aria-label="Zoom in"><Plus /></Slot>
              <Gripper />
              <Slot aria-label="Launch"><I w={18} h={14}><path d="M1.500 1.500h15v11h-15z" fill="#fafafa" stroke="#b5b5b5" /><path d="M5 4h7v7H5z" fill="#8ec2ea" /><path d="M3 5v6M14.500 5v6" stroke="#bbb" /></I></Slot>
              <Slot $w={12} aria-label="Launch options"><Chev c="#aaa" /></Slot>
              <EndCol aria-label="Customize"><I w={8} h={9}><path d="M1 1l3 3 3-3M.5 7.500h7" stroke="#333" strokeWidth="1.400" /></I></EndCol>
            </StatusBar>
          </Main>
        </Body>

        <Flyout>
          <Column $w={127}>
            <FlyButton><WinStack /><span>Document Tabs</span><Chev /></FlyButton>
            <FlyButton $on><Panes /><span>Panes</span><Chev /></FlyButton>
            <FlyButton $dim><Portfolio /><span>Portfolio</span><Chev c="#999" /></FlyButton>
          </Column>
          <VLine $h={84} $m={1} />
          <BigButton $w={52}><BigFace><Theme /></BigFace>UI<InlineRow>Theme <Chev /></InlineRow></BigButton>
        </Flyout>

        <Menu role="menu">
          {entries.map((e, i) => e
            ? <MenuItem key={i} role="menuitem" $on={e.on}>{e.icon}{e.text}{e.keys && <kbd>{e.keys}</kbd>}</MenuItem>
            : <MenuLine key={i} />)}
        </Menu>
      </Window>
    </>
  );
}
